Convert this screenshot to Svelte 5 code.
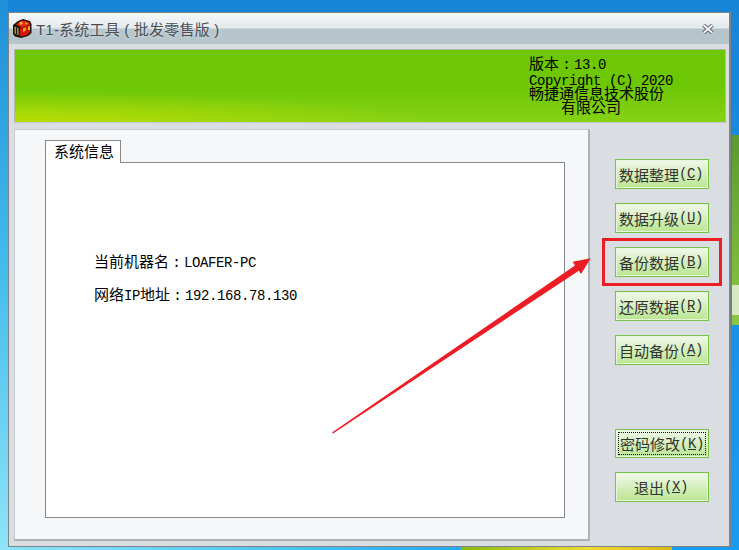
<script>
  const buttons = [
    { label: "数据整理", key: "C" },
    { label: "数据升级", key: "U" },
    { label: "备份数据", key: "B" },
    { label: "还原数据", key: "R" },
    { label: "自动备份", key: "A" }
  ];
</script>

<div class="desktop">
  <div class="window">
    <div class="titlebar">
      <svg class="logo" width="20" height="21" viewBox="0 0 20 21">
        <path d="M1 7 L6 3 L11 1 L18 3 L19.500 6 L19.500 15 L16 18 L9 20 L3 18.500 L1 16 Z" fill="#24100a" />
        <path d="M4 6.500 L10 2.500 L17 4 L18 6.500 L10 9.500 Z" fill="#e8200f" />
        <path d="M7 4.500 L10 3.500 L11 6 L8 7 Z M13 4 L16 5.500 L14 7 Z" fill="#f8b010" />
        <path d="M8 10 L18 7 L18 14.500 L15 17 L9 18.500 L7.500 17.500 Z" fill="#d4150c" />
        <path d="M11 10.500 L14 9.500 L13.500 13 L11 14 Z M16 8.500 L18 8 L18 12 L16 12 Z" fill="#f8a818" />
        <path d="M2.500 8.500 L6.500 10 L6.500 17 L2.500 15.500 Z" fill="#a8a030" />
        <path d="M4.500 9.500 L4.500 16" stroke="#24100a" stroke-width="1.200" />
      </svg>
      <span class="title">T1-系统工具 ( 批发零售版 )</span>
      <svg class="close" width="12" height="10" viewBox="0 0 12 10">
        <path d="M1.500 1 L10.500 9 M10.500 1 L1.500 9" stroke="#5d6468" stroke-width="3.800" />
        <path d="M1.500 1 L10.500 9 M10.500 1 L1.500 9" stroke="#f4f6f7" stroke-width="1.800" />
      </svg>
    </div>

    <div class="banner">
      <div class="about">
        <div class="version">版本<span class="colon">:</span><span class="lat">13.0</span></div>
        <div class="copy"><span class="lat">Copyright (C) 2020</span></div>
        <div class="company">畅捷通信息技术股份</div>
        <div class="company second">有限公司</div>
      </div>
    </div>

    <div class="main">
      <div class="panel">
        <div class="tab">系统信息</div>
        <div class="sheet">
          <p>当前机器名<span class="colon">:</span><span class="lat">LOAFER-PC</span></p>
          <p>网络<span class="lat">IP</span>地址<span class="colon">:</span><span class="lat">192.168.78.130</span></p>
        </div>
      </div>

      <div class="actions">
        {#each buttons as b}
          <button>{b.label}<span class="lat">(<u>{b.key}</u>)</span></button>
        {/each}
        <div class="spacer"></div>
        <button class="focused"><span class="dots">密码修改<span class="lat">(<u>K</u>)</span></span></button>
        <button>退出<span class="lat">(<u>X</u>)</span></button>
      </div>
    </div>
  </div>

  <div class="highlight"></div>
  <svg class="arrow" width="739" height="550" viewBox="0 0 739 550">
    <path d="M332 432.500 L575 265.500 L572.700 261.700 L590.700 258.300 L581 274 L578.800 270.700 L333 433.500 Z" fill="#ee1c25" />
  </svg>
</div>

<style>
  :global(body) {
    margin: 0;
    overflow: hidden;
  }

  .desktop {
    position: relative;
    box-sizing: border-box;
    width: 739px;
    height: 550px;
    padding: 12px 8px 3px;
    background:
      linear-gradient(#d8e8c0, #d8e8c0) 732px 285px / 7px 30px no-repeat,
      linear-gradient(#5a9a30, #8cc840) 732px 135px / 7px 190px no-repeat,
      linear-gradient(90deg, #8ab818, #f0dc30 60%, #d8b818) 461px 547px / 211px 3px no-repeat,
      linear-gradient(90deg, #8fe4f8 0, #45bdf0 330px, #2aa8f0 461px) 0 547px / 461px 3px no-repeat,
      linear-gradient(#1884d8, #1a9cf0);
    font-family: "Noto Sans CJK SC", "Liberation Mono", monospace;
    font-size: 15px;
    color: #000;
  }

  .desktop::before {
    content: "";
    position: absolute;
    left: 0;
    top: 0;
    width: 8px;
    height: 550px;
    background: linear-gradient(#1f8fd8, #45bdec 50%, #8fe4f8);
  }

  .lat {
    font-family: "Liberation Mono", monospace;
    font-size: 14px;
    letter-spacing: -0.4px;
  }

  .colon {
    display: inline-block;
    width: 15px;
    text-align: center;
    font-family: "Liberation Mono", monospace;
  }

  .window {
    position: relative;
    box-sizing: border-box;
    height: 535px;
    border: 1px solid #7d8487;
    border-right-width: 2px;
    background: #dadde1;
    display: flex;
    flex-direction: column;
    padding: 0 4px 3px 5px;
  }

  .titlebar {
    height: 31px;
    margin: 0 -4px 0 -5px;
    padding: 0 15px 0 3px;
    display: flex;
    align-items: center;
    background: linear-gradient(#f6f8f9 0, #e3e9ec 15px, #b6c5cc 16px, #b6c5cc 100%);
  }

  .logo {
    flex: none;
  }

  .title {
    margin-left: 4px;
    flex: 1;
    font-family: "Liberation Sans", "Noto Sans CJK SC", sans-serif;
    font-size: 15px;
    letter-spacing: 0.2px;
    color: #4a5054;
    text-shadow: 0 0 4px rgba(255, 255, 255, 0.6);
  }

  .banner {
    margin-top: 5px;
    height: 72px;
    width: 710px;
    flex: none;
    border: 1px solid #b2b9ae;
    border-bottom-color: #c3c8c6;
    background:
      radial-gradient(ellipse 420px 30px at 0 100%, rgba(190, 222, 0, 0.9), transparent),
      linear-gradient(#6dc705 50%, #86d215 100%);
  }

  .about {
    margin-left: 514px;
    padding-top: 3px;
  }

  .version {
    height: 18px;
    line-height: 19px;
  }

  .copy {
    height: 15px;
    line-height: 16px;
  }

  .company {
    height: 14px;
    line-height: 14px;
  }

  .company.second {
    margin-left: 32px;
  }

  .main {
    flex: 1;
    display: flex;
    margin-top: 6px;
    min-height: 0;
  }

  .panel {
    box-sizing: border-box;
    width: 576px;
    height: 412px;
    flex: none;
    border: 1px solid #c4c8cc;
    border-right: 2px solid #adb1b5;
    border-bottom: 2px solid #adb1b5;
    background: #f6f7f9;
    padding: 10px 24px 0 30px;
    display: flex;
    flex-direction: column;
  }

  .tab {
    box-sizing: border-box;
    width: 76px;
    height: 23px;
    margin-bottom: -1px;
    padding-left: 8px;
    border: 1px solid #85888c;
    border-bottom: none;
    background: #fff;
    line-height: 20px;
    position: relative;
    z-index: 1;
  }

  .sheet {
    box-sizing: border-box;
    height: 356px;
    width: 520px;
    border: 1px solid #85888c;
    background: #fff;
    padding: 88px 0 0 48px;
  }

  .sheet p {
    margin: 0;
    height: 33px;
    line-height: 20px;
    white-space: pre;
  }

  .actions {
    flex: 1;
    display: flex;
    flex-direction: column;
    align-items: flex-start;
    gap: 14px;
    padding: 30px 0 0 25px;
  }

  .spacer {
    height: 36px;
  }

  button {
    box-sizing: border-box;
    width: 94px;
    height: 30px;
    flex: none;
    padding: 0 2px 0 0;
    border: 1px solid #78c048;
    box-shadow: inset 0 0 0 1px #e8f5dc;
    background: linear-gradient(#f2f8ec, #b9e690);
    font: inherit;
    color: #333;
    white-space: nowrap;
    display: flex;
    align-items: center;
    justify-content: center;
  }

  .spacer + button {
    height: 29px;
    padding: 0;
  }

  .focused .dots {
    box-sizing: border-box;
    width: 88px;
    height: 23px;
    display: flex;
    align-items: center;
    justify-content: center;
    border: 1px dotted #111;
  }

  .highlight {
    position: absolute;
    left: 602px;
    top: 238px;
    width: 120px;
    height: 48px;
    box-sizing: border-box;
    border: 3px solid #ee1c25;
  }

  .arrow {
    position: absolute;
    left: 0;
    top: 0;
    pointer-events: none;
  }
</style>
